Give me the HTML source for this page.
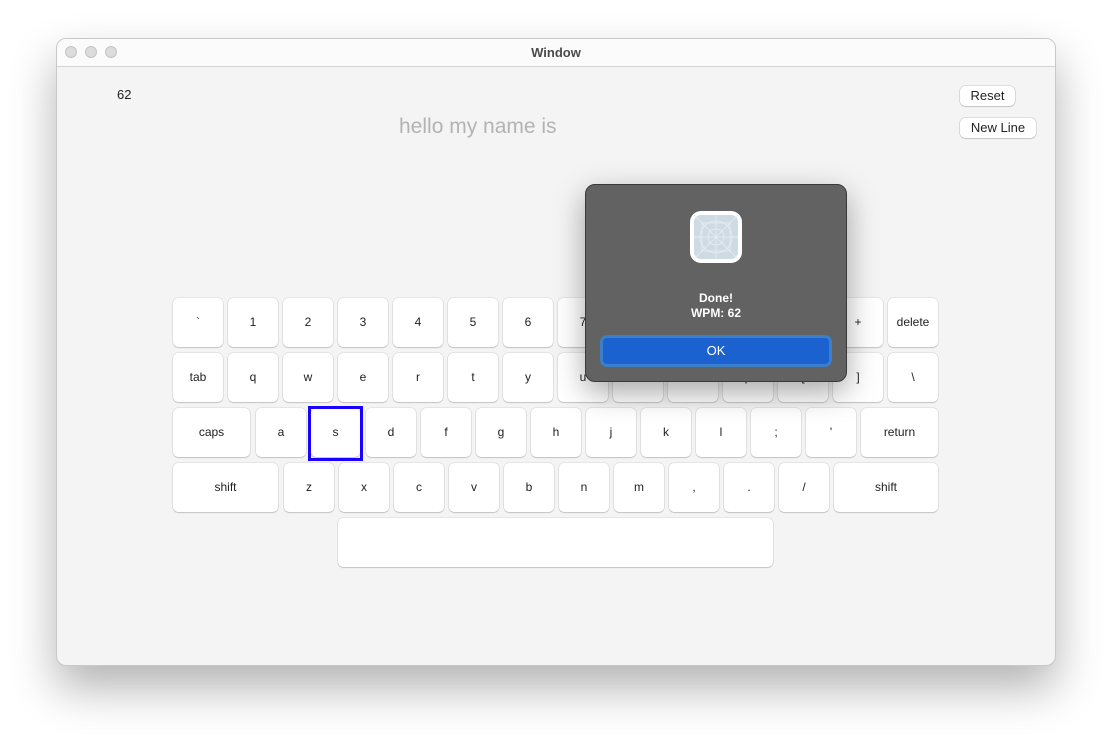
<!DOCTYPE html>
<html><head><style>
*{margin:0;padding:0;box-sizing:border-box}
body{width:1112px;height:740px;background:#fff;font-family:"Liberation Sans",sans-serif;position:relative;overflow:hidden}
.win{position:absolute;left:56px;top:38px;width:1000px;height:628px;background:#f4f4f4;border-radius:10px;border:1px solid #c8c8c8;box-shadow:0 22px 45px rgba(0,0,0,.3);overflow:hidden}
.tb{position:absolute;left:0;top:0;width:100%;height:28px;background:#fbfbfb;border-bottom:1px solid #d4d4d4;text-align:center;font-size:13px;font-weight:bold;color:#4a4a4a;line-height:27px}
.dot{position:absolute;top:7px;width:12px;height:12px;border-radius:50%;background:#dcdcdc;border:1px solid #c4c4c4}
.k{position:absolute;background:#fff;border-radius:5px;box-shadow:0 0 0 .5px rgba(0,0,0,.12),0 1px 1px rgba(0,0,0,.15);font-size:12px;color:#222;text-align:center;line-height:49px;height:49px}
.btn{position:absolute;background:#fff;border-radius:5px;box-shadow:0 0 0 .5px rgba(0,0,0,.18),0 1px 1px rgba(0,0,0,.12);font-size:13px;color:#222;text-align:center;line-height:20px;height:20px}
</style></head><body>
<div class="win">
<div class="tb">Window</div>
<div class="dot" style="left:8px"></div><div class="dot" style="left:28px"></div><div class="dot" style="left:48px"></div>
</div>
<div style="position:absolute;left:117px;top:87px;font-size:13px;color:#222">62</div>
<div style="position:absolute;left:399px;top:115px;font-size:21px;color:#b3b3b3">hello my name is</div>
<div class="btn" style="left:960px;top:86px;width:55px">Reset</div>
<div class="btn" style="left:960px;top:118px;width:76px">New Line</div>
<div id="kb"></div>
<div style="position:absolute;left:308px;top:406px;width:55px;height:55px;border:3px solid #1a00ff"></div>
<div style="position:absolute;left:585px;top:184px;width:262px;height:198px;background:#626262;border-radius:10px;border:1px solid #3a3a3a;box-shadow:0 10px 30px rgba(0,0,0,.35)">
<div style="position:absolute;left:104px;top:26px;width:52px;height:52px;background:#fff;border-radius:11px;padding:4px">
<svg width="44" height="44" viewBox="0 0 44 44" style="display:block"><rect width="44" height="44" rx="7" fill="#cfdbe3"/><g stroke="#e6eef3" stroke-width=".8" fill="none"><circle cx="22" cy="22" r="16"/><circle cx="22" cy="22" r="8"/><line x1="0" y1="0" x2="44" y2="44"/><line x1="44" y1="0" x2="0" y2="44"/><line x1="22" y1="0" x2="22" y2="44"/><line x1="0" y1="22" x2="44" y2="22"/><rect x="8" y="8" width="28" height="28"/></g></svg></div>
<div style="position:absolute;left:0;top:106px;width:100%;text-align:center;color:#fff;font-weight:bold;font-size:12px;line-height:15px">Done!<br>WPM: 62</div>
<div style="position:absolute;left:14px;top:150px;width:232px;height:32px;border-radius:7px;background:#1b62d0;border:3px solid #3a7fc8;color:#fff;font-size:13px;text-align:center;line-height:26px">OK</div>
</div>
<script>
var rows=[
[298,[[173,50,'`'],[228,50,'1'],[283,50,'2'],[338,50,'3'],[393,50,'4'],[448,50,'5'],[503,50,'6'],[558,50,'7'],[613,50,'8'],[668,50,'9'],[723,50,'0'],[778,50,'-'],[833,50,'+'],[888,50,'delete']]],
[353,[[173,50,'tab'],[228,50,'q'],[283,50,'w'],[338,50,'e'],[393,50,'r'],[448,50,'t'],[503,50,'y'],[558,50,'u'],[613,50,'i'],[668,50,'o'],[723,50,'p'],[778,50,'['],[833,50,']'],[888,50,'\\']]],
[408,[[173,77,'caps'],[256,50,'a'],[311,49,'s'],[366,50,'d'],[421,50,'f'],[476,50,'g'],[531,50,'h'],[586,50,'j'],[641,50,'k'],[696,50,'l'],[751,50,';'],[806,50,"'"],[861,77,'return']]],
[463,[[173,105,'shift'],[284,50,'z'],[339,50,'x'],[394,50,'c'],[449,50,'v'],[504,50,'b'],[559,50,'n'],[614,50,'m'],[669,50,','],[724,50,'.'],[779,50,'/'],[834,104,'shift']]],
[518,[[338,435,'']]]];
var h='';rows.forEach(function(r){r[1].forEach(function(k){h+='<div class="k" style="left:'+k[0]+'px;top:'+r[0]+'px;width:'+k[1]+'px">'+k[2].replace('<','&lt;')+'</div>';});});
document.getElementById('kb').innerHTML=h;
</script>
</body></html>
